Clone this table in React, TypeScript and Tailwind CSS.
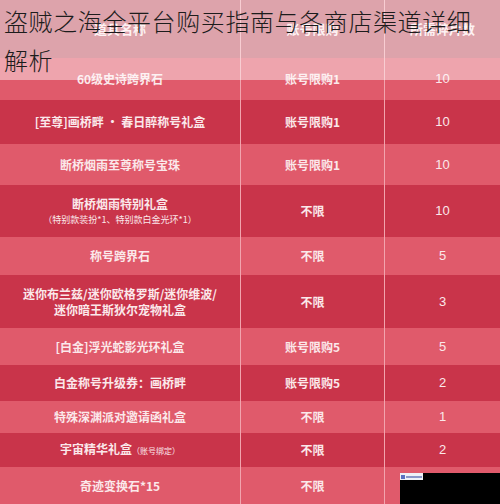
const font = { fontFamily: '"Noto Sans CJK SC", "Noto Sans", sans-serif' };

type Row = { name: string; sub?: string; limit: string; cost: string; h: string; dark: boolean };

const rows: Row[] = [
  { name: "60级史诗跨界石", limit: "账号限购1", cost: "10", h: "h-[42px]", dark: false },
  { name: "[至尊]画桥畔 · 春日醉称号礼盒", limit: "账号限购1", cost: "10", h: "h-[44px]", dark: true },
  { name: "断桥烟雨至尊称号宝珠", limit: "账号限购1", cost: "10", h: "h-[41px]", dark: false },
  {
    name: "断桥烟雨特别礼盒",
    sub: "（特别款装扮*1、特别款白金光环*1）",
    limit: "不限",
    cost: "10",
    h: "h-[52px]",
    dark: true,
  },
  { name: "称号跨界石", limit: "不限", cost: "5", h: "h-[38px]", dark: false },
  {
    name: "迷你布兰兹/迷你欧格罗斯/迷你维波/",
    sub: "迷你暗王斯狄尔宠物礼盒",
    limit: "不限",
    cost: "3",
    h: "h-[53px]",
    dark: true,
  },
  { name: "[白金]浮光蛇影光环礼盒", limit: "账号限购5", cost: "5", h: "h-[37px]", dark: false },
  { name: "白金称号升级券：画桥畔", limit: "账号限购5", cost: "2", h: "h-[36px]", dark: true },
  { name: "特殊深渊派对邀请函礼盒", limit: "不限", cost: "1", h: "h-[32px]", dark: false },
  { name: "宇宙精华礼盒", sub: "inline", limit: "不限", cost: "2", h: "h-[34px]", dark: true },
  { name: "奇迹变换石*15", limit: "不限", cost: "", h: "h-[37px]", dark: false },
];

function Cell({ children, last }: { children: React.ReactNode; last?: boolean }) {
  return (
    <div
      className={
        "flex flex-col items-center justify-center text-center " +
        (last ? "" : "border-r border-[#f2a4ae]")
      }
    >
      {children}
    </div>
  );
}

export default function App() {
  return (
    <div className="relative w-[500px] h-[504px] overflow-hidden bg-[#d24458]" style={font}>
      {/* Table */}
      <div className="flex flex-col text-[#fbe8ea] font-bold">
        <div className="grid grid-cols-[241px_144px_115px] h-[58px] bg-[#c25866] text-[13px]">
          <Cell>道具名称</Cell>
          <Cell>账号限购</Cell>
          <Cell last>所需碎片数</Cell>
        </div>
        {rows.map((r, i) => (
          <div
            key={i}
            className={
              "grid grid-cols-[241px_144px_115px] text-[12px] leading-[16px] " +
              r.h +
              " " +
              (r.dark ? "bg-[#c9344a]" : "bg-[#e05a6b]")
            }
          >
            <Cell>
              {r.sub === "inline" ? (
                <span>
                  {r.name}
                  <span className="text-[8px] font-normal">（账号绑定）</span>
                </span>
              ) : (
                <>
                  <span>{r.name}</span>
                  {r.sub && (
                    <span
                      className={
                        r.sub.startsWith("（")
                          ? "text-[9px] font-normal leading-[14px] mt-[1px]"
                          : "leading-[16px]"
                      }
                    >
                      {r.sub}
                    </span>
                  )}
                </>
              )}
            </Cell>
            <Cell>{r.limit}</Cell>
            <Cell last>
              <span className="text-[13px] font-normal" style={{ fontFamily: '"Liberation Sans", Arial, sans-serif' }}>
                {r.cost}
              </span>
            </Cell>
          </div>
        ))}
      </div>

      {/* Title overlay */}
      <div className="absolute top-0 left-0 right-0 h-[80px] bg-white/45 pl-[4px] pt-[1px]">
        <h1 className="text-[24px] leading-[39px] font-light text-[#1c1c1c] tracking-[0.6px]">
          盗贼之海全平台购买指南与各商店渠道详细
          <br />
          解析
        </h1>
      </div>

      {/* Watermark box */}
      <div className="absolute right-0 bottom-0 w-[100px] h-[31px] bg-black">
        <div className="w-[23px] h-[7px] bg-[#eef0f6] flex items-center gap-[1px] px-[1px]">
          <div className="w-[4px] h-[4px] bg-[#5a6fc0]" />
          <div className="flex-1 h-[2px] bg-[#8a96c8]" />
        </div>
      </div>
    </div>
  );
}
